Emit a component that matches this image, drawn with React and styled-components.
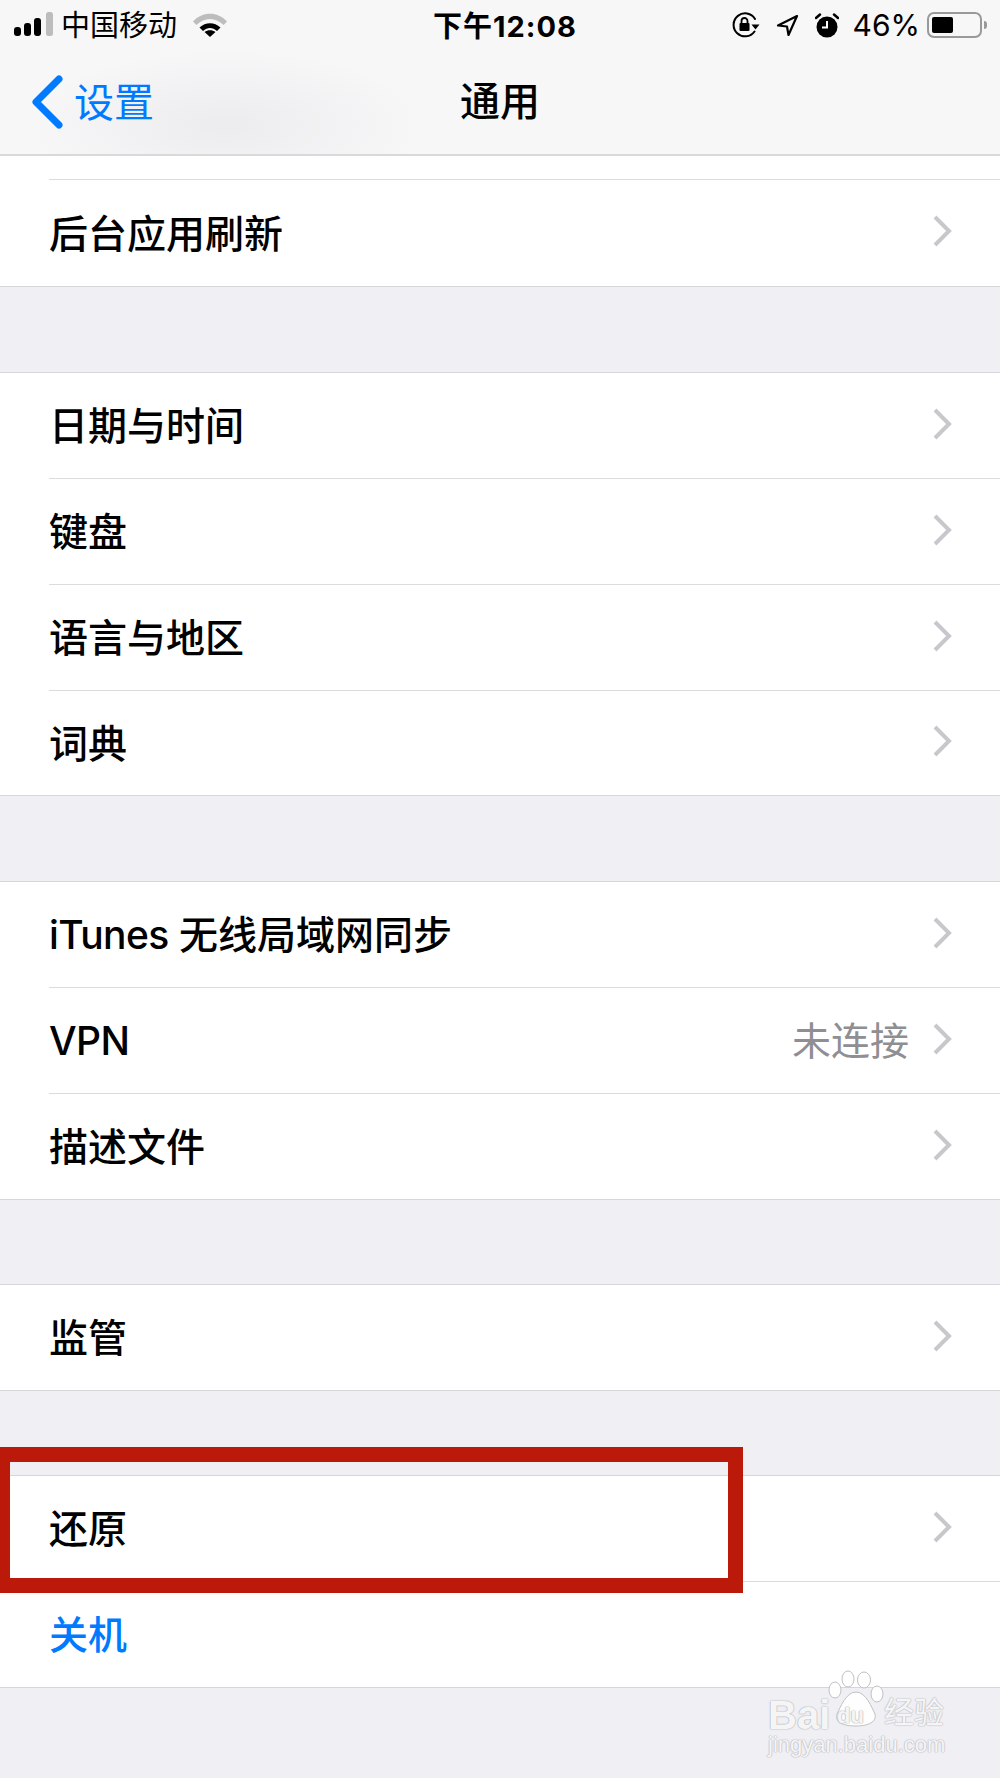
import React from "react";
import styled, { createGlobalStyle } from "styled-components";

const cjk = `"Inter", "Noto Sans CJK SC", sans-serif`;

const GlobalStyle = createGlobalStyle`
  html, body {
    margin: 0;
    padding: 0;
    background: #efeff4;
  }
  * {
    box-sizing: border-box;
  }
`;

const Page = styled.div`
  position: relative;
  width: 1000px;
  height: 1778px;
  overflow: hidden;
  background: #efeff4;
  font-family: ${cjk};
  color: #000;
`;

const Header = styled.header`
  height: 156px;
  border-bottom: 2px solid #d9d9da;
  background: radial-gradient(ellipse 200px 75px at 225px 125px, #ececee 0%, rgba(240, 240, 242, 0) 100%), #f7f7f8;
`;

const StatusBar = styled.div`
  height: 50px;
  padding: 0 12px 0 14px;
  display: grid;
  grid-template-columns: 1fr auto 1fr;
  align-items: center;
  font-size: 29px;
`;

const StatusLeft = styled.div`
  display: flex;
  align-items: center;
`;

const Carrier = styled.span`
  margin: 0 16px 0 7px;
  line-height: 1;
`;

const Time = styled.div`
  font-weight: 700;
  font-size: 29px;
  letter-spacing: 1px;
  padding-left: 8px;
  margin-bottom: 2px;
`;

const StatusRight = styled.div`
  display: flex;
  align-items: center;
  justify-content: flex-end;
`;

const Percent = styled.span`
  margin: 0 7px 0 14px;
  font-size: 30px;
  line-height: 1;
`;

const Battery = styled.div`
  position: relative;
  width: 55px;
  height: 26px;
  border: 2px solid #999;
  border-radius: 7px;
  padding: 3px;
  margin-right: 6px;

  &::before {
    content: "";
    display: block;
    height: 100%;
    width: 46%;
    background: #000;
    border-radius: 2px;
  }

  &::after {
    content: "";
    position: absolute;
    right: -7px;
    top: 7px;
    width: 3px;
    height: 8px;
    background: #999;
    border-radius: 0 3px 3px 0;
  }
`;

const NavBar = styled.div`
  position: relative;
  height: 104px;
  display: flex;
  align-items: center;
  justify-content: center;
`;

const BackLink = styled.div`
  position: absolute;
  left: 31px;
  top: 24px;
  display: flex;
  align-items: center;
  gap: 11px;
  color: #007aff;
  font-size: 40px;
  line-height: 54px;
`;

const BackLabel = styled.span`
  padding-top: 2px;
`;

const Title = styled.h1`
  margin: 0;
  font-size: 40px;
  font-weight: 500;
  line-height: 54px;
`;

const Group = styled.section`
  background: #fff;
  border-top: ${(p) => (p.$flush ? "none" : "1px solid #d6d6da")};
  border-bottom: 1px solid #d6d6da;
  margin-bottom: ${(p) => p.$gap}px;
`;

const Row = styled.div`
  height: ${(p) => p.$h}px;
  padding-left: 49px;
  display: flex;
`;

const RowInner = styled.div`
  flex: 1;
  display: flex;
  align-items: center;
  justify-content: space-between;
  padding-right: 48px;
  border-bottom: ${(p) => (p.$last ? "none" : "1px solid #dcdcdf")};
`;

const Label = styled.span`
  font-size: 39px;
  font-weight: 500;
  line-height: 54px;
  padding-top: 1px;
  color: ${(p) => (p.$blue ? "#007aff" : "#000")};
`;

const Latin = styled.span`
  letter-spacing: -0.6px;
`;

const RowEnd = styled.span`
  display: flex;
  align-items: center;
  gap: 24px;
`;

const Value = styled.span`
  font-size: 39px;
  line-height: 54px;
  color: #8e8e93;
`;

const ChevronSlot = styled.span`
  display: flex;
  margin-bottom: 4px;
`;

const Highlight = styled.div`
  position: absolute;
  left: -5px;
  top: 1447px;
  width: 748px;
  height: 146px;
  border: 15px solid #bb1a0a;
`;

const Watermark = styled.div`
  position: absolute;
  left: 766px;
  top: 1668px;
  width: 184px;
  height: 92px;
  color: rgba(255, 255, 255, 0.9);
  font-family: "Liberation Sans", "Noto Sans CJK SC", sans-serif;
  text-shadow: 0 0 1px #b4b4ba, 0 0 1px #b4b4ba, 0 0 2px #c8c8cd;
`;

const MarkLine = styled.div`
  position: absolute;
  top: ${(p) => p.$top}px;
  left: ${(p) => p.$left}px;
  font-size: ${(p) => p.$size}px;
  font-weight: ${(p) => p.$weight || 400};
  line-height: 1;
  white-space: nowrap;
`;

const Signal = () => (
  <svg width="40" height="26" viewBox="0 0 40 26">
    <rect x="0" y="15" width="7" height="9" rx="3" fill="#000" />
    <rect x="10" y="11" width="7" height="13" rx="3" fill="#000" />
    <rect x="20" y="6" width="7" height="18" rx="3" fill="#000" />
    <rect x="32" y="0" width="7" height="24" rx="2.5" fill="#bdbdbd" />
  </svg>
);

const Wifi = () => (
  <svg width="34" height="24" viewBox="0 0 34 24">
    <path d="M0 8.5C9.5 -1.8 24.5 -1.8 34 8.5L30.6 12C22.5 4 11.5 4 3.400 12Z" fill="#bdbdbd" />
    <path d="M6.5 14.500C12.500 8.700 21.500 8.700 27.500 14.500L24 18C19.500 14 14.500 14 10 18Z" fill="#000" />
    <path d="M11.500 19C14.800 16.500 19.200 16.500 22.500 19L17 24Z" fill="#000" />
  </svg>
);

const OrientationLock = () => (
  <svg width="28" height="26" viewBox="0 0 28 26" fill="none">
    <path d="M22.500 19.500A11.500 11.500 0 1 1 23 7" stroke="#000" strokeWidth="2" strokeLinecap="round" />
    <path d="M19.500 12.500H27.500L23.500 17.500Z" fill="#000" />
    <rect x="7.500" y="11" width="10" height="8" rx="1" fill="#000" />
    <path d="M9.500 11V9a3 3 0 0 1 6 0V11" stroke="#000" strokeWidth="1.800" />
  </svg>
);

const LocationArrow = () => (
  <svg width="23" height="23" viewBox="0 0 23 23" fill="none" style={{ marginLeft: 16 }}>
    <path d="M21 2L2 11.500L11 12.500L12.500 21Z" stroke="#000" strokeWidth="2.200" strokeLinejoin="round" />
  </svg>
);

const Alarm = () => (
  <svg width="24" height="25" viewBox="0 0 24 25" style={{ marginLeft: 16 }}>
    <circle cx="12" cy="14" r="10.500" fill="#000" />
    <path d="M12 8V14.500H7" stroke="#fff" strokeWidth="2" fill="none" />
    <path d="M1 5L5 1.500M23 5L19 1.500" stroke="#000" strokeWidth="2.500" strokeLinecap="round" />
  </svg>
);

const BackChevron = () => (
  <svg width="32" height="54" viewBox="0 0 32 54" fill="none">
    <path d="M28 4L5 27L28 50" stroke="#007aff" strokeWidth="7" strokeLinecap="round" strokeLinejoin="round" />
  </svg>
);

const Chevron = () => (
  <ChevronSlot>
    <svg width="19" height="32" viewBox="0 0 19 32" fill="none">
      <path d="M2 2L16 16L2 30" stroke="#c7c7cc" strokeWidth="4" />
    </svg>
  </ChevronSlot>
);

const Paw = () => (
  <svg
    width="56"
    height="60"
    viewBox="0 0 56 60"
    fill="rgba(255,255,255,0.9)"
    stroke="#c0c0c5"
    strokeWidth="1"
    style={{ position: "absolute", left: 62, top: 0 }}
  >
    <ellipse cx="20" cy="11" rx="6" ry="8" />
    <ellipse cx="36" cy="12" rx="6.500" ry="8" />
    <ellipse cx="7" cy="22" rx="6" ry="8" />
    <ellipse cx="49" cy="26" rx="6" ry="8" />
    <path d="M28 24C38 24 44 40 47 46C49 54 40 58 28 58C14 58 7 54 9 46C12 40 18 24 28 24Z" />
  </svg>
);

const groups = [
  {
    gap: 85,
    lastH: 104,
    rows: [{ label: "日期与时间" }, { label: "键盘" }, { label: "语言与地区" }, { label: "词典" }],
  },
  {
    gap: 84,
    lastH: 105,
    rows: [
      { label: <><Latin>iTunes</Latin> 无线局域网同步</>, id: "itunes" },
      { label: <Latin>VPN</Latin>, id: "vpn", value: "未连接" },
      { label: "描述文件" },
    ],
  },
  { gap: 84, lastH: 105, rows: [{ label: "监管" }] },
  { gap: 0, lastH: 105, rows: [{ label: "还原" }, { label: "关机", blue: true, plain: true }] },
];

export default function App() {
  return (
    <Page>
      <GlobalStyle />
      <Header>
        <StatusBar>
          <StatusLeft>
            <Signal />
            <Carrier>中国移动</Carrier>
            <Wifi />
          </StatusLeft>
          <Time>下午12:08</Time>
          <StatusRight>
            <OrientationLock />
            <LocationArrow />
            <Alarm />
            <Percent>46%</Percent>
            <Battery />
          </StatusRight>
        </StatusBar>
        <NavBar>
          <BackLink>
            <BackChevron />
            <BackLabel>设置</BackLabel>
          </BackLink>
          <Title>通用</Title>
        </NavBar>
      </Header>

      <Group $flush $gap={85}>
        <Row $h={24}>
          <RowInner />
        </Row>
        <Row $h={106}>
          <RowInner $last>
            <Label>后台应用刷新</Label>
            <Chevron />
          </RowInner>
        </Row>
      </Group>

      {groups.map((group, i) => (
        <Group key={i} $gap={group.gap}>
          {group.rows.map((row, j) => {
            const last = j === group.rows.length - 1;
            return (
              <Row key={row.id || row.label} $h={last ? group.lastH : 106}>
                <RowInner $last={last}>
                  <Label $blue={row.blue}>{row.label}</Label>
                  {!row.plain && (
                    <RowEnd>
                      {row.value && <Value>{row.value}</Value>}
                      <Chevron />
                    </RowEnd>
                  )}
                </RowInner>
              </Row>
            );
          })}
        </Group>
      ))}

      <Highlight />

      <Watermark>
        <Paw />
        <MarkLine $top={27} $left={2} $size={40} $weight={700}>Bai</MarkLine>
        <MarkLine $top={37} $left={71} $size={22} $weight={700}>du</MarkLine>
        <MarkLine $top={30} $left={118} $size={30}>经验</MarkLine>
        <MarkLine $top={66} $left={2} $size={22}>jingyan.baidu.com</MarkLine>
      </Watermark>
    </Page>
  );
}
